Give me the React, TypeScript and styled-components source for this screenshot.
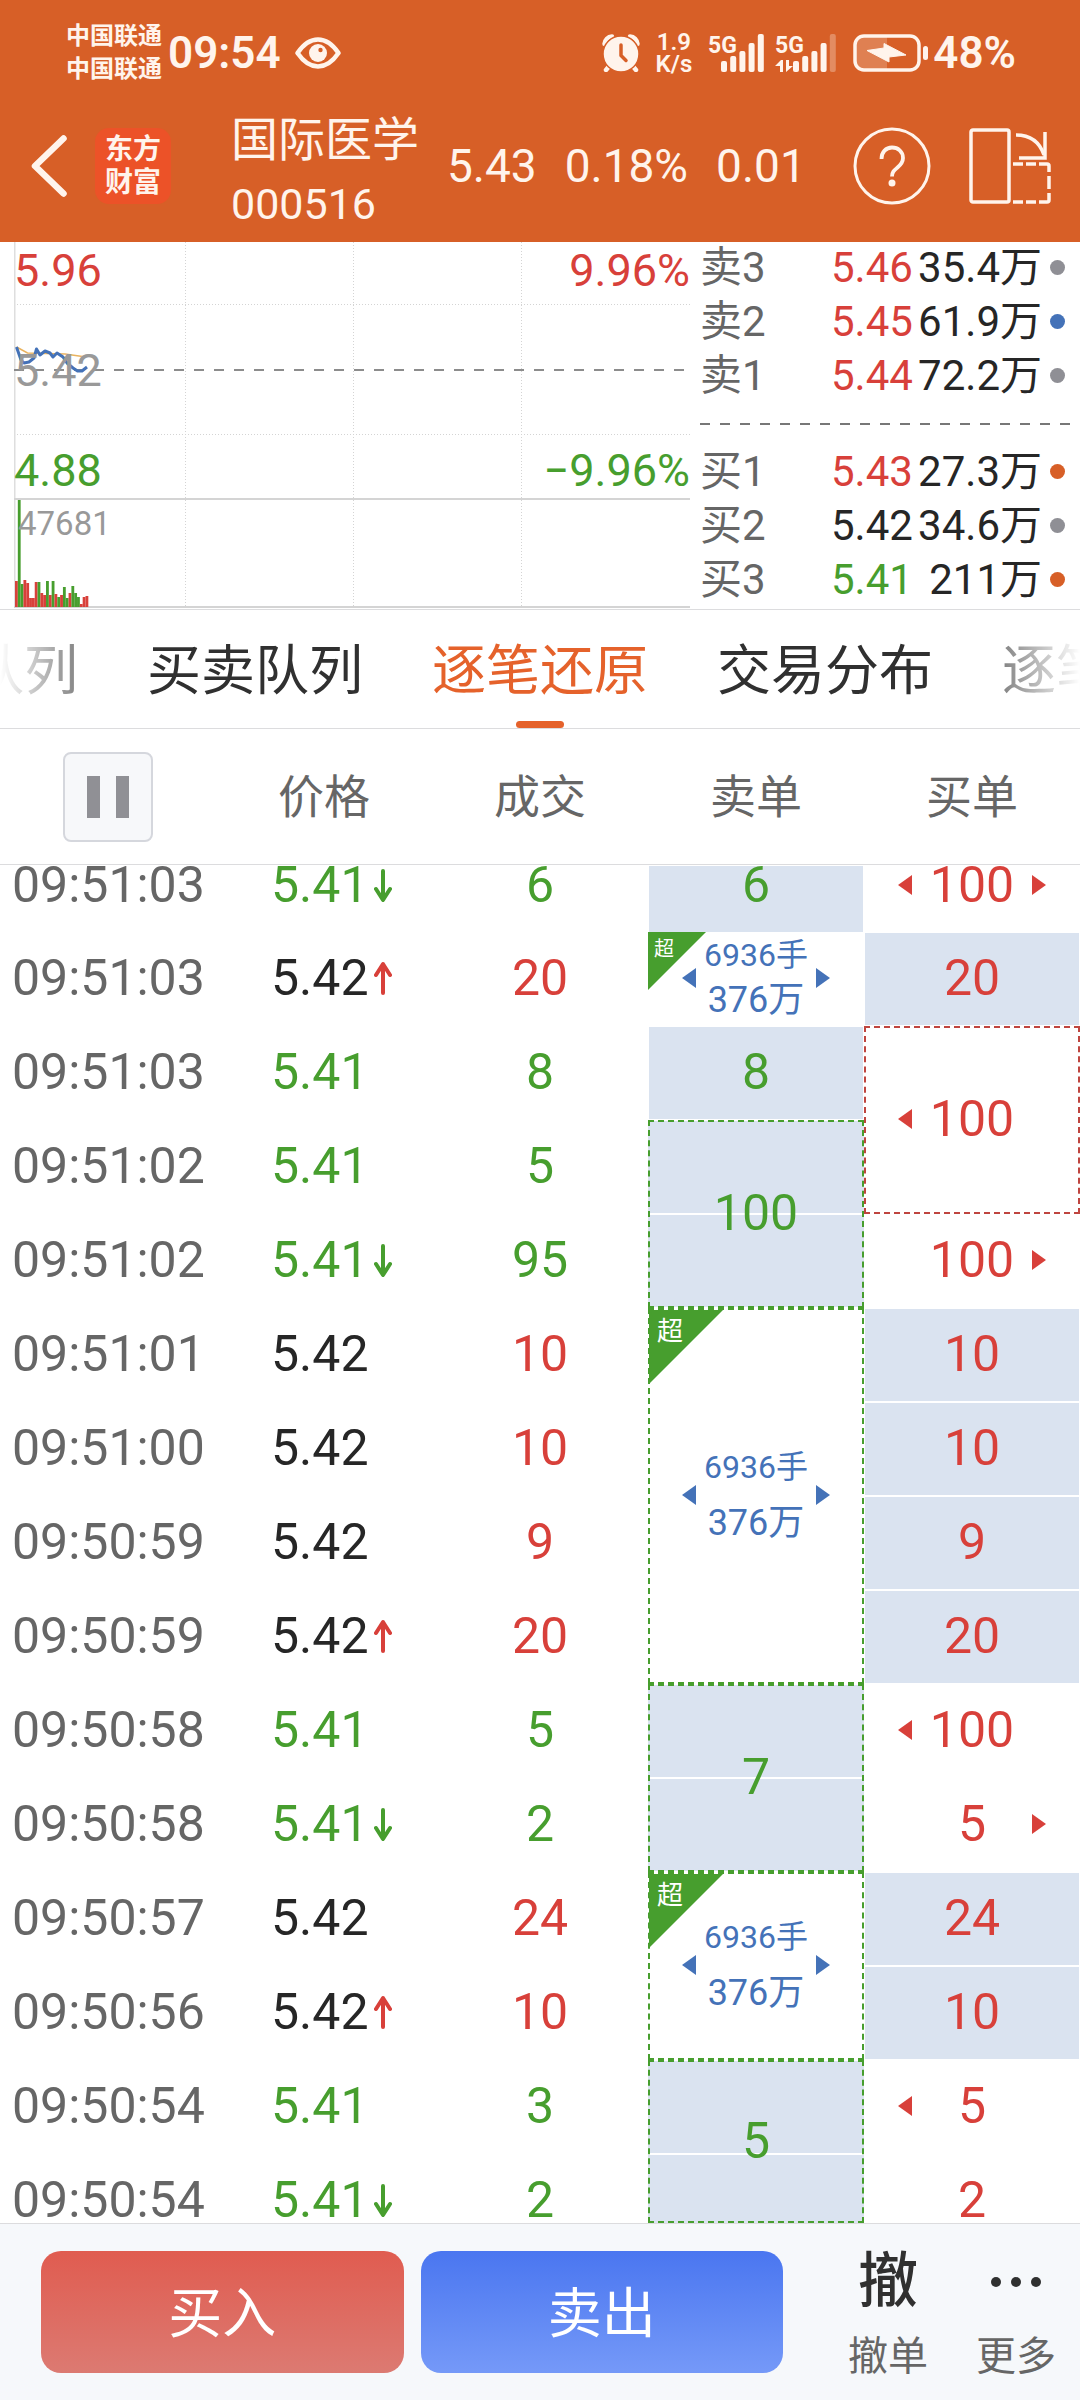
import React from "react";
import styled, { createGlobalStyle, css } from "styled-components";

const RED = "#d8403a";
const GREEN = "#479e2e";
const BLUE = "#4472b8";
const INK = "#262626";
const GREY = "#666666";
const ORANGE = "#d75f27";
const TINT = "#dae3f0";
const LINE = "#dcdcde";
const CREAM = "#fff4ec";

const GlobalStyle = createGlobalStyle`
  * { box-sizing: border-box; }
  body { margin: 0; background: #fff; }
  button { font: inherit; color: inherit; border: 0; padding: 0; background: none; cursor: pointer; }
  svg { display: block; }
`;

const Screen = styled.div`
  display: flex;
  flex-direction: column;
  height: 100vh;
  background: #fff;
  color: ${INK};
  font-family: Roboto, "Noto Sans CJK SC", sans-serif;
`;

/* ---------- header ---------- */

const Header = styled.header`
  padding-top: 16px;
  background: ${ORANGE};
  color: ${CREAM};
`;

const StatusBar = styled.div`
  display: flex;
  align-items: center;
  height: 74px;
  padding: 0 64px 0 66px;
  font-weight: 600;
`;

const Carriers = styled.div`
  font-size: 24px;
  line-height: 33px;
  font-weight: 700;
`;

const Clock = styled.time`
  margin: 0 14px 0 6px;
  font-size: 44px;
  line-height: 52px;
`;

const StatusIcons = styled.div`
  display: flex;
  align-items: center;
  gap: 16px;
  margin-left: auto;
`;

const Signals = styled.div`
  display: flex;
  gap: 10px;
`;

const Speed = styled.div`
  font-size: 24px;
  line-height: 22px;
  text-align: center;
`;

const BatteryGroup = styled.div`
  display: flex;
  align-items: center;
  gap: 4px;
  font-size: 44px;
  line-height: 52px;
`;

const TitleBar = styled.div`
  display: flex;
  align-items: center;
  height: 152px;
  padding: 0 29px 0 31px;
`;

const Logo = styled.div`
  display: grid;
  place-content: center;
  width: 76px;
  height: 76px;
  margin: 0 60px 0 28px;
  border-radius: 14px;
  background: #ec5228;
  font-size: 28px;
  line-height: 33px;
  font-weight: 700;
`;

const StockTitle = styled.div`
  padding-top: 12px;
  line-height: 64px;
`;

const StockName = styled.h1`
  margin: 0;
  font-size: 47px;
  font-weight: 400;
`;

const StockCode = styled.div`
  font-size: 43px;
`;

const Quote = styled.div`
  display: flex;
  gap: 28px;
  margin-left: 28px;
  font-size: 46px;
  line-height: 56px;
`;

const TitleActions = styled.div`
  display: flex;
  align-items: center;
  gap: 38px;
  margin-left: auto;
`;

/* ---------- chart and order book ---------- */

const Market = styled.section`
  display: grid;
  grid-template-columns: 676fr 390fr;
  padding-left: 14px;
  border-bottom: 1px solid ${LINE};
`;

const Chart = styled.div`
  position: relative;
  height: 367px;
  svg {
    width: 100%;
    height: 100%;
  }
`;

const ChartLabel = styled.span<{ $top: number; $right?: boolean; $color: string; $small?: boolean }>`
  position: absolute;
  top: ${(p) => p.$top}px;
  ${(p) => (p.$right ? "right: 0;" : p.$small ? "left: 4px;" : "left: 0;")}
  color: ${(p) => p.$color};
  font-size: ${(p) => (p.$small ? 33 : 45)}px;
  line-height: 48px;
`;

const Book = styled.div`
  display: flex;
  flex-direction: column;
  gap: 7px;
  padding: 2px 10px 0;
`;

const BookRow = styled.div`
  display: grid;
  grid-template-columns: 131px 1fr auto 15px;
  align-items: center;
  padding-right: 5px;
  font-size: 42px;
  line-height: 47px;
`;

const BookLabel = styled.span`
  color: ${GREY};
`;

const BookPrice = styled.span<{ $color: string }>`
  color: ${(p) => p.$color};
`;

const BookVolume = styled.span`
  margin-right: 8px;
`;

const Dot = styled.i<{ $color: string }>`
  width: 15px;
  height: 15px;
  border-radius: 50%;
  background: ${(p) => p.$color};
`;

const BookDivider = styled.div`
  height: 35px;
  background: repeating-linear-gradient(90deg, #777 0 10px, transparent 10px 20px) center / 100% 2px no-repeat;
`;

/* ---------- tabs ---------- */

const TabBar = styled.div`
  flex: none;
  border-bottom: 1px solid ${LINE};
`;

const Tabs = styled.nav`
  display: flex;
  justify-content: center;
  gap: 69px;
  overflow: hidden;
  mask-image: linear-gradient(90deg, transparent, #000 130px, #000 calc(100% - 130px), transparent);
`;

const Tab = styled.button<{ $active?: boolean; $align?: string }>`
  flex: none;
  display: flex;
  flex-direction: column;
  align-items: ${(p) => p.$align ?? "center"};
  width: 216px;
  padding-top: 12px;
  font-size: 54px;
  line-height: 99px;
  white-space: nowrap;
  color: ${(p) => (p.$active ? "#e5622b" : "#303030")};
  &::after {
    content: "";
    width: 48px;
    height: 7px;
    border-radius: 4px;
    background: ${(p) => (p.$active ? "#e5622b" : "transparent")};
  }
`;

/* ---------- tick table ---------- */

const TableArea = styled.main`
  flex: 1;
  min-height: 0;
  overflow: hidden;
`;

const Table = styled.table`
  width: 100%;
  table-layout: fixed;
  border-collapse: separate;
  border-spacing: 0;
  font-size: 50px;
  line-height: 40px;
`;

const Th = styled.th`
  height: 136px;
  padding: 0;
  border-bottom: 1px solid ${LINE};
  color: ${GREY};
  font-size: 46px;
  font-weight: 400;
`;

const PauseButton = styled.button`
  display: inline-flex;
  align-items: center;
  justify-content: center;
  gap: 16px;
  width: 90px;
  height: 90px;
  border: 2px solid #d5d7dd;
  border-radius: 8px;
  background: #f7f8fa;
  vertical-align: middle;
  &::before,
  &::after {
    content: "";
    width: 13px;
    height: 42px;
    background: #909095;
  }
`;

const Row = styled.tr<{ $edge?: "top" | "bottom" }>`
  height: ${(p) => (p.$edge === "top" ? 67 : p.$edge === "bottom" ? 69 : 94)}px;
  > td {
    padding: 0 0 2px;
    ${(p) => p.$edge === "top" && "padding-bottom: 27px;"}
    ${(p) => p.$edge === "bottom" && "padding: 24px 0 1px;"}
  }
`;

const TimeCell = styled.td`
  color: ${GREY};
  text-indent: 12px;
`;

const PriceCell = styled.td<{ $color: string }>`
  color: ${(p) => p.$color};
`;

const PriceLine = styled.div`
  display: flex;
  align-items: center;
  gap: 5px;
  padding-left: 55px;
`;

const VolumeCell = styled.td<{ $color: string }>`
  color: ${(p) => p.$color};
  text-align: center;
`;

const OrderCell = styled.td<{ $color: string; $fill?: boolean; $dashed?: boolean }>`
  position: relative;
  color: ${(p) => p.$color};
  text-align: center;
  border-left: 1px solid #fff;
  border-right: 1px solid #fff;
  ${(p) =>
    p.$fill &&
    css`
      background: repeating-linear-gradient(#fff 0 1px, ${TINT} 1px 93px, #fff 93px 94px) border-box;
    `}
  ${(p) => p.$dashed && `border: 2px dashed ${p.$color === RED ? "#bf453f" : GREEN};`}
`;

const OrderGrid = styled.div`
  display: grid;
  grid-template-columns: 14px 120px 14px;
  align-items: center;
  justify-content: center;
  white-space: nowrap;
`;

const Triangle = styled.i<{ $dir?: "left" | "right"; $color: string }>`
  height: 20px;
  ${(p) =>
    p.$dir &&
    css`
      background: ${p.$color};
      clip-path: ${p.$dir === "left" ? "polygon(0 50%, 100% 0, 100% 100%)" : "polygon(0 0, 100% 50%, 0 100%)"};
    `}
`;

const BigOrder = styled.div<{ $tall?: boolean }>`
  display: flex;
  flex-direction: column;
  align-items: center;
  color: ${BLUE};
  font-size: 32px;
  line-height: ${(p) => (p.$tall ? 56 : 45)}px;
`;

const BigAmount = styled.span`
  font-size: 36px;
`;

const Corner = styled.span<{ $tall?: boolean }>`
  position: absolute;
  top: 0;
  left: -1px;
  width: ${(p) => (p.$tall ? 74 : 58)}px;
  height: ${(p) => (p.$tall ? 74 : 58)}px;
  padding: ${(p) => (p.$tall ? "8px 0 0 8px" : "4px 0 0 6px")};
  background: ${GREEN};
  clip-path: polygon(0 0, 100% 0, 0 100%);
  color: #fff;
  font-size: ${(p) => (p.$tall ? 26 : 20)}px;
  line-height: 26px;
  text-align: left;
`;

/* ---------- bottom bar ---------- */

const Footer = styled.footer`
  display: flex;
  flex: none;
  align-items: flex-start;
  height: 177px;
  padding: 27px 0 0 41px;
  border-top: 1px solid ${LINE};
  background: #f6f8fb;
`;

const TradeButtons = styled.div`
  display: flex;
  flex: 1;
  gap: 17px;
  margin-right: 41px;
`;

const TradeButton = styled.button<{ $from: string; $to: string }>`
  flex: 1;
  height: 122px;
  padding-bottom: 6px;
  border-radius: 20px;
  background: linear-gradient(${(p) => p.$from}, ${(p) => p.$to});
  color: #fff;
  font-size: 54px;
`;

const ToolButton = styled.button`
  display: grid;
  grid-template-rows: 62px 64px;
  place-items: center;
  width: 128px;
  color: ${GREY};
  font-size: 40px;
  line-height: 40px;
`;

const ToolGlyph = styled.span`
  color: #303030;
  font-size: 60px;
  line-height: 62px;
  font-weight: 500;
`;

const ToolCaption = styled.span`
  align-self: end;
`;

/* ---------- drawings ---------- */

const EyeIcon = () => (
  <svg width="46" height="32" viewBox="0 0 46 32" fill="none">
    <path d="M2.500 16C9 6.500 16 2.500 23 2.500S37 6.500 43.500 16C37 25.500 30 29.500 23 29.500S9 25.500 2.500 16Z" stroke={CREAM} strokeWidth="4.500" strokeLinejoin="round" />
    <circle cx="23" cy="16" r="9" fill={CREAM} />
    <circle cx="25.500" cy="13" r="2.200" fill={ORANGE} />
  </svg>
);

const AlarmIcon = () => (
  <svg width="38" height="38" viewBox="0 0 38 38" fill="none">
    <path d="M9 30 4 36M29 30l5 6" stroke={CREAM} strokeWidth="4.500" strokeLinecap="round" />
    <path d="M2.500 10A8 8 0 0 1 10 2.500M28 2.500A8 8 0 0 1 35.500 10" stroke={CREAM} strokeWidth="4.500" strokeLinecap="round" />
    <circle cx="19" cy="20" r="18" fill={CREAM} stroke={ORANGE} strokeWidth="1.500" />
    <path d="M19 11v10.500l5 5" stroke={ORANGE} strokeWidth="3.500" strokeLinecap="round" strokeLinejoin="round" />
  </svg>
);

const SignalIcon = ({ shift = 0, faded = false }: { shift?: number; faded?: boolean }) => (
  <svg width={57 + shift} height="38" viewBox={`0 0 ${57 + shift} 38`} fill={CREAM} overflow="visible">
    <text x="0" y="19" fontSize="23" fontWeight="700">5G</text>
    {faded && <path d="M5 26v12h3V26H6L0 32h5ZM11 26v12l7-6h-4v-6Z" />}
    {[27, 22, 17, 9, 0].map((y, i) => (
      <rect key={y} x={13 + shift + i * 9.2} y={y} width="6" height={38 - y} rx="2" opacity={faded && i === 4 ? 0.3 : 1} />
    ))}
  </svg>
);

const BatteryIcon = () => (
  <svg width="76" height="38" viewBox="0 0 76 38" fill="none">
    <path d="M11 3h23v32H11a8 8 0 0 1-8-8V11a8 8 0 0 1 8-8Z" fill={CREAM} opacity=".22" />
    <rect x="2" y="2" width="64" height="34" rx="9" stroke={CREAM} strokeWidth="3.500" />
    <path d="M14 16.500 31 14V9.500L53 21l-17 2v5Z" fill={CREAM} stroke={CREAM} strokeLinejoin="round" />
    <rect x="70" y="12" width="5" height="14" rx="2.500" fill={CREAM} />
  </svg>
);

const BackIcon = () => (
  <svg width="36" height="62" viewBox="0 0 36 62" fill="none">
    <path d="M32.500 3.500 4 31l28.500 27.500" stroke={CREAM} strokeWidth="6.500" strokeLinecap="round" strokeLinejoin="round" />
  </svg>
);

const HelpIcon = () => (
  <svg width="78" height="78" viewBox="0 0 78 78" fill="none">
    <circle cx="39" cy="39" r="37" stroke={CREAM} strokeWidth="3" />
    <path d="M28.500 32c0-7 4.500-11.500 10.500-11.500S50 24.500 50 31c0 4.500-2.500 7-5.500 9.500-3.500 3-5.500 4.500-5.500 9" stroke={CREAM} strokeWidth="3.800" />
    <circle cx="39" cy="56" r="3.500" fill={CREAM} />
  </svg>
);

const RotateIcon = () => (
  <svg width="82" height="76" viewBox="0 0 82 76" fill="none" stroke={CREAM} strokeWidth="3.500">
    <rect x="2" y="2" width="38" height="72" rx="2" />
    <path d="M47 7c15 0 24 8 28 20" />
    <path d="M76 4v26H50" />
    <path d="M44 36h10M57 36h10M70 36h8q2 0 2 2v6M80 48v13M80 65v7q0 2-2 2h-8M67 74H57M54 74H44" />
  </svg>
);

const TickArrow = ({ up }: { up: boolean }) => (
  <svg width="18" height="34" viewBox="0 0 18 34" fill="none" stroke={up ? RED : GREEN} strokeWidth="4" strokeLinecap="round" strokeLinejoin="round">
    <path d={up ? "M9 32V4M2 14 9 3l7 11" : "M9 3v28M2 21l7 11 7-11"} />
  </svg>
);

const MoreIcon = () => (
  <svg width="52" height="12" viewBox="0 0 52 12" fill="#303030">
    <circle cx="6" cy="6" r="5" />
    <circle cx="26" cy="6" r="5" />
    <circle cx="46" cy="6" r="5" />
  </svg>
);

const volumes: [number, "r" | "g"][] = [
  [26, "r"], [107, "g"], [23, "g"], [27, "r"], [24, "r"], [9, "r"], [9, "r"], [25, "r"], [25, "g"],
  [14, "r"], [12, "r"], [26, "g"], [12, "r"], [26, "g"], [13, "r"], [10, "g"], [12, "r"], [20, "g"],
  [9, "g"], [14, "r"], [21, "g"], [14, "g"], [10, "g"], [3, "r"], [10, "r"], [11, "r"],
];

const PriceChart = () => (
  <svg viewBox="0 0 676 367" preserveAspectRatio="none" fill="none">
    <g stroke="#d4d4d4" strokeDasharray="1 2">
      <path d="M171.500 0V364M339.500 0V364M507.500 0V364M0 62.500H676M0 192.500H676" />
    </g>
    <path d="M.5 0V365" stroke="#dedede" strokeWidth="2" />
    <path d="M0 257H676M0 365H676" stroke="#d4d4d4" strokeWidth="2" />
    <path d="M0 128H672" stroke="#8c8c8c" strokeWidth="2" strokeDasharray="10 10" />
    <path d="M2.500 105 13.500 111 51 112 72 115" stroke="#eab35e" strokeWidth="1.500" />
    <path d="M2.500 105 7 118 10 121 15 120 20 116 22.500 107 26 113 31 109 36 111 39 115 43 111 49 115 53 121 59 126 63.500 129 68 129 73 125" stroke={BLUE} strokeWidth="3" strokeLinejoin="round" />
    {volumes.map(([h, c], i) => (
      <rect key={i} x={1 + i * 2.82} y={365 - h} width="2.820" height={h} fill={c === "r" ? RED : GREEN} />
    ))}
  </svg>
);

/* ---------- data ---------- */

const sells: [string, string, string, string, string][] = [
  ["卖3", "5.46", RED, "35.4万", "#8f8f95"],
  ["卖2", "5.45", RED, "61.9万", "#4472b8"],
  ["卖1", "5.44", RED, "72.2万", "#8f8f95"],
];
const buys: [string, string, string, string, string][] = [
  ["买1", "5.43", RED, "27.3万", ORANGE],
  ["买2", "5.42", INK, "34.6万", "#8f8f95"],
  ["买3", "5.41", GREEN, "211万", ORANGE],
];

type Order = { text?: string; span?: number; fill?: boolean; left?: boolean; right?: boolean; big?: boolean };
type Tick = { time: string; price: string; dir?: "up" | "down"; volume: string; sell?: Order; buy?: Order };

const ticks: Tick[] = [
  { time: "09:51:03", price: "5.41", dir: "down", volume: "6", sell: { text: "6", fill: true }, buy: { text: "100", left: true, right: true } },
  { time: "09:51:03", price: "5.42", dir: "up", volume: "20", sell: { big: true }, buy: { text: "20", fill: true } },
  { time: "09:51:03", price: "5.41", volume: "8", sell: { text: "8", fill: true }, buy: { text: "100", span: 2, left: true } },
  { time: "09:51:02", price: "5.41", volume: "5", sell: { text: "100", span: 2, fill: true } },
  { time: "09:51:02", price: "5.41", dir: "down", volume: "95", buy: { text: "100", right: true } },
  { time: "09:51:01", price: "5.42", volume: "10", sell: { big: true, span: 4 }, buy: { text: "10", fill: true } },
  { time: "09:51:00", price: "5.42", volume: "10", buy: { text: "10", fill: true } },
  { time: "09:50:59", price: "5.42", volume: "9", buy: { text: "9", fill: true } },
  { time: "09:50:59", price: "5.42", dir: "up", volume: "20", buy: { text: "20", fill: true } },
  { time: "09:50:58", price: "5.41", volume: "5", sell: { text: "7", span: 2, fill: true }, buy: { text: "100", left: true } },
  { time: "09:50:58", price: "5.41", dir: "down", volume: "2", buy: { text: "5", right: true } },
  { time: "09:50:57", price: "5.42", volume: "24", sell: { big: true, span: 2 }, buy: { text: "24", fill: true } },
  { time: "09:50:56", price: "5.42", dir: "up", volume: "10", buy: { text: "10", fill: true } },
  { time: "09:50:54", price: "5.41", volume: "3", sell: { text: "5", span: 2, fill: true }, buy: { text: "5", left: true } },
  { time: "09:50:54", price: "5.41", dir: "down", volume: "2", buy: { text: "2" } },
];

/* ---------- parts ---------- */

const BookLine = ({ row }: { row: [string, string, string, string, string] }) => (
  <BookRow>
    <BookLabel>{row[0]}</BookLabel>
    <BookPrice $color={row[2]}>{row[1]}</BookPrice>
    <BookVolume>{row[3]}</BookVolume>
    <Dot $color={row[4]} />
  </BookRow>
);

const OrderView = ({ order, side }: { order: Order; side: "sell" | "buy" }) => {
  const span = order.span ?? 1;
  const sideColor = side === "sell" ? GREEN : RED;
  const arrowColor = order.big ? BLUE : sideColor;
  return (
    <OrderCell rowSpan={span} $color={sideColor} $fill={order.fill} $dashed={span > 1}>
      {order.big && <Corner $tall={span > 1}>超</Corner>}
      <OrderGrid>
        <Triangle $color={arrowColor} $dir={order.left || order.big ? "left" : undefined} />
        {order.big ? (
          <BigOrder $tall={span > 1}>
            <span>6936手</span>
            <BigAmount>376万</BigAmount>
          </BigOrder>
        ) : (
          <span>{order.text}</span>
        )}
        <Triangle $color={arrowColor} $dir={order.right || order.big ? "right" : undefined} />
      </OrderGrid>
    </OrderCell>
  );
};

export default function App() {
  return (
    <Screen>
      <GlobalStyle />
      <Header>
        <StatusBar>
          <Carriers>
            <div>中国联通</div>
            <div>中国联通</div>
          </Carriers>
          <Clock>09:54</Clock>
          <EyeIcon />
          <StatusIcons>
            <AlarmIcon />
            <Speed>
              <div>1.9</div>
              <div>K/s</div>
            </Speed>
            <Signals>
              <SignalIcon />
              <SignalIcon shift={5} faded />
            </Signals>
            <BatteryGroup>
              <BatteryIcon />
              <span>48%</span>
            </BatteryGroup>
          </StatusIcons>
        </StatusBar>
        <TitleBar>
          <button aria-label="返回"><BackIcon /></button>
          <Logo>
            <span>东方</span>
            <span>财富</span>
          </Logo>
          <StockTitle>
            <StockName>国际医学</StockName>
            <StockCode>000516</StockCode>
          </StockTitle>
          <Quote>
            <span>5.43</span>
            <span>0.18%</span>
            <span>0.01</span>
          </Quote>
          <TitleActions>
            <button aria-label="帮助"><HelpIcon /></button>
            <button aria-label="横屏"><RotateIcon /></button>
          </TitleActions>
        </TitleBar>
      </Header>

      <Market>
        <Chart>
          <PriceChart />
          <ChartLabel $top={5} $color={RED}>5.96</ChartLabel>
          <ChartLabel $top={5} $color={RED} $right>9.96%</ChartLabel>
          <ChartLabel $top={105} $color="#999">5.42</ChartLabel>
          <ChartLabel $top={205} $color={GREEN}>4.88</ChartLabel>
          <ChartLabel $top={205} $color={GREEN} $right>−9.96%</ChartLabel>
          <ChartLabel $top={258} $color="#999" $small>47681</ChartLabel>
        </Chart>
        <Book>
          {sells.map((row) => <BookLine key={row[0]} row={row} />)}
          <BookDivider />
          {buys.map((row) => <BookLine key={row[0]} row={row} />)}
        </Book>
      </Market>

      <TabBar>
        <Tabs>
          <Tab $align="flex-end">队列</Tab>
          <Tab>买卖队列</Tab>
          <Tab $active>逐笔还原</Tab>
          <Tab>交易分布</Tab>
          <Tab $align="flex-start">逐笔</Tab>
        </Tabs>
      </TabBar>

      <TableArea>
        <Table>
          <thead>
            <tr>
              <Th><PauseButton aria-label="暂停" /></Th>
              <Th>价格</Th>
              <Th>成交</Th>
              <Th>卖单</Th>
              <Th>买单</Th>
            </tr>
          </thead>
          <tbody>
            {ticks.map((t, i) => {
              const down = t.price === "5.41";
              return (
                <Row key={i} $edge={i === 0 ? "top" : i === ticks.length - 1 ? "bottom" : undefined}>
                  <TimeCell>{t.time}</TimeCell>
                  <PriceCell $color={down ? GREEN : INK}>
                    <PriceLine>
                      {t.price}
                      {t.dir && <TickArrow up={t.dir === "up"} />}
                    </PriceLine>
                  </PriceCell>
                  <VolumeCell $color={down ? GREEN : RED}>{t.volume}</VolumeCell>
                  {t.sell && <OrderView order={t.sell} side="sell" />}
                  {t.buy && <OrderView order={t.buy} side="buy" />}
                </Row>
              );
            })}
          </tbody>
        </Table>
      </TableArea>

      <Footer>
        <TradeButtons>
          <TradeButton $from="#e05c50" $to="#dc7a72">买入</TradeButton>
          <TradeButton $from="#4a76f0" $to="#7599f8">卖出</TradeButton>
        </TradeButtons>
        <ToolButton>
          <ToolGlyph>撤</ToolGlyph>
          <ToolCaption>撤单</ToolCaption>
        </ToolButton>
        <ToolButton>
          <MoreIcon />
          <ToolCaption>更多</ToolCaption>
        </ToolButton>
      </Footer>
    </Screen>
  );
}
